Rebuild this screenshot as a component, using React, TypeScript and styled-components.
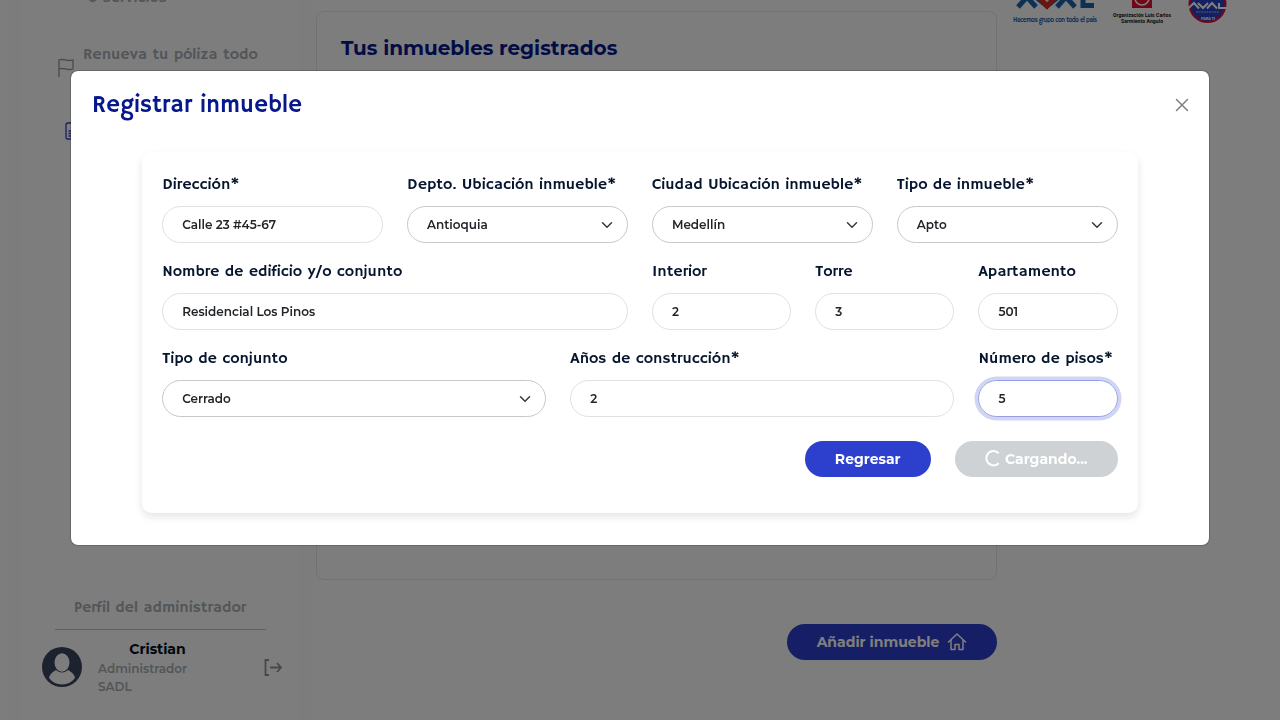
import React from "react";
import styled, { createGlobalStyle } from "styled-components";

const Global = createGlobalStyle`
  *{box-sizing:border-box}
  html,body{margin:0;height:720px;overflow:hidden}
  body{font-family:Montserrat,Inter,"Liberation Sans",sans-serif;background:#fafafa;color:#212529}
  button,input,select{font:inherit}
  svg{display:block;flex:none}
`;

const HEAD = `"Hammersmith One","Noto Sans","Liberation Sans",sans-serif`;

const Page = styled.div`height:720px;display:flex;overflow:hidden;padding-left:20px;background:#fafafa;`;
const Sidebar = styled.aside`width:280px;height:720px;display:flex;flex-direction:column;background:#fbfbfb;box-shadow:0 0 20px rgba(0,0,0,.035);`;
const Nav = styled.nav`flex:1;display:flex;flex-direction:column;`;
const NavTail = styled.div`height:28px;margin:-14px 0 0 68px;font:600 16px/24px ${HEAD};color:#a5acb3;`;
const NavItem = styled.div`display:flex;gap:8px;margin:29px 0 0 37px;align-items:flex-start;color:#a5acb3;font:600 16px/24px ${HEAD};`;
const FlagSlot = styled.span`padding-top:15px;`;
const DocSlot = styled.span`margin:43px 0 0 43px;`;
const Profile = styled.section`padding:0 18px 0 22px;height:125px;`;
const ProfileTitle = styled.h3`margin:0 16px 0 13px;height:35px;border-bottom:1px solid #b8bdd4;padding:1px 1px 0 0;text-align:center;font:600 16px/24px ${HEAD};color:#a5acb3;`;
const ProfileRow = styled.div`display:flex;align-items:center;margin-top:8px;`;
const ProfileText = styled.div`width:116px;margin-left:16px;font-size:12px;line-height:18px;font-weight:600;color:#a5acb3;`;
const UserName = styled.div`padding-left:3px;white-space:nowrap;text-align:center;font-weight:700;font-size:14px;line-height:22px;color:#000b20;`;
const Exit = styled.span`margin:2px 0 0 46px;`;
const Main = styled.main`width:681px;margin:11px 0 0 16px;display:flex;flex-direction:column;align-items:flex-end;`;
const Panel = styled.section`width:681px;height:569px;border:1px solid #e5e5e5;border-radius:8px;padding:20px 24px;`;
const PanelTitle = styled.h2`margin:0;font-size:20px;line-height:32px;font-weight:700;color:#06188c;`;
const Logos = styled.div`display:flex;align-items:flex-start;margin-left:15px;height:30px;`;

const Pill = styled.button<{ $w: number; $muted?: boolean }>`
  width:${p => p.$w}px;height:36px;border:0;border-radius:18px;padding:0;
  display:flex;align-items:center;justify-content:center;gap:${p => (p.$muted ? 4 : 8)}px;
  background:${p => (p.$muted ? "#ced2d5" : "#2c3fcd")};color:#fff;font-size:14px;font-weight:700;
`;
const AddSlot = styled.div`margin-top:44px;`;

const Backdrop = styled.div`position:fixed;inset:0;background:rgba(0,0,0,.5);display:flex;justify-content:center;align-items:flex-start;padding-top:70px;`;
const Dialog = styled.div`width:1140px;height:476px;background:#fff;background-clip:padding-box;border:1px solid rgba(0,0,0,.175);border-radius:8px;`;
const DialogHead = styled.header`display:flex;justify-content:space-between;align-items:center;height:67px;padding:0 20px 0 21px;`;
const DialogTitle = styled.h1`margin:0;font:400 24px/32px ${HEAD};color:#06188c;`;
const Card = styled.form`width:996px;height:361px;margin:14px auto 0;padding:20px 20.250px 20px 20.150px;border-radius:10px;background:#fff;box-shadow:0 4px 8px rgba(0,0,0,.1);`;
const Grid = styled.div`display:grid;grid-template-columns:repeat(12,minmax(0,1fr));column-gap:24px;row-gap:16px;`;
const Field = styled.label<{ $span: number }>`grid-column:span ${p => p.$span};display:flex;flex-direction:column;gap:9px;`;
const Label = styled.span`height:25px;padding-top:1px;font:600 16px/24px ${HEAD};color:#04152d;white-space:nowrap;`;
const Control = styled.span<{ $select?: boolean; $focus?: boolean }>`
  height:37px;padding:0 12px 0 19px;display:flex;align-items:center;justify-content:space-between;
  border:1px solid ${p => (p.$focus ? "#969fe6" : p.$select ? "#c8c8c8" : "#dee2e6")};border-radius:19px;
  box-shadow:${p => (p.$focus ? "0 0 0 3.500px rgba(44,63,205,.22)" : "none")};
  font-size:12px;font-weight:600;color:#212529;
`;
const Actions = styled.div`display:flex;justify-content:flex-end;gap:24px;margin-top:24px;`;

const Chevron = () => (
  <svg width="16" height="12" viewBox="0 0 16 16"><path d="m2 5 6 6 6-6" fill="none" stroke="#343a40" strokeWidth="2" strokeLinecap="round" strokeLinejoin="round" /></svg>
);

type F = { label: string; value: string; span: number; select?: boolean; focus?: boolean };
const fields: F[] = [
  { label: "Dirección*", value: "Calle 23 #45-67", span: 3 },
  { label: "Depto. Ubicación inmueble*", value: "Antioquia", span: 3, select: true },
  { label: "Ciudad Ubicación inmueble*", value: "Medellín", span: 3, select: true },
  { label: "Tipo de inmueble*", value: "Apto", span: 3, select: true },
  { label: "Nombre de edificio y/o conjunto", value: "Residencial Los Pinos", span: 6 },
  { label: "Interior", value: "2", span: 2 },
  { label: "Torre", value: "3", span: 2 },
  { label: "Apartamento", value: "501", span: 2 },
  { label: "Tipo de conjunto", value: "Cerrado", span: 5, select: true },
  { label: "Años de construcción*", value: "2", span: 5 },
  { label: "Número de pisos*", value: "5", span: 2, focus: true },
];

const BrandLogos = () => (
  <svg width="220" height="26" viewBox="1012 0 220 26">
    <g fontFamily="Roboto,sans-serif" fontWeight="700">
      <g fill="none" strokeWidth="5">
        <path d="M1018 7l9-10 9 10M1057 7l9-10 9 10M1083-3V5.500h11" stroke="#1f61aa" />
        <path d="M1036-3l11 9 11-9" stroke="#1f61aa" />
      </g>
      <path d="M1038-4l9 10 9-10" fill="none" stroke="#d8281e" strokeWidth="5" />
      <text x="1013" y="22" fontSize="6.500" fill="#1f61aa" textLength="84" fontFamily="Hammersmith One,sans-serif" fontWeight="400">Hacemos grupo con todo el país</text>
      <path d="M1132-2h20V8h-20z" fill="#e5102a" />
      <circle cx="1142" cy="-2" r="7" fill="none" stroke="#fff" strokeWidth="1.6" />
      <text x="1113" y="17" fontSize="5" fill="#111" textLength="58">Organización Luis Carlos</text>
      <text x="1121" y="22.500" fontSize="5" fill="#111" textLength="42">Sarmiento Angulo</text>
      <circle cx="1207.500" cy="4" r="18" fill="#2742c4" stroke="#e5102a" strokeWidth="2" />
      <path d="M1188 8.500l6-5.500 5 5.500M1198 3l5 5 5-5M1207 8.500l5-5.500 5 5.500M1219 3v5h8" fill="none" stroke="#fff" strokeWidth="2" />
      <path d="M1196 12h23" stroke="#fff" strokeOpacity=".6" strokeWidth="1" strokeDasharray="2 .6" />
      <text x="1201" y="20" fontSize="4" fill="#fff" textLength="14">PARA TI</text>
    </g>
  </svg>
);

export default function App() {
  return (
    <>
      <Global />
      <Page>
        <Sidebar>
          <Nav>
            <NavTail>o servicios</NavTail>
            <NavItem>
              <FlagSlot><svg width="18" height="20" viewBox="0 0 18 20"><path d="M2 19V2c5-2 8 2 14 0v9c-6 2-9-2-14 0" fill="none" stroke="#8d949c" strokeWidth="1.300" /></svg></FlagSlot>
              <span>Renueva tu póliza todo</span>
            </NavItem>
            <DocSlot><svg width="16" height="20" viewBox="0 0 16 20"><path d="M4 2h8l3 3v13H4q-1 0-1-2V4q0-2 2-2M5.500 10h8M5.500 12.500h8M5.500 15h8" fill="none" stroke="#2c3fcd" strokeWidth="1.300" /></svg></DocSlot>
          </Nav>
          <Profile>
            <ProfileTitle>Perfil del administrador</ProfileTitle>
            <ProfileRow>
              <svg width="40" height="40" viewBox="0 0 40 40"><circle cx="20" cy="20" r="20" fill="#39465c" /><ellipse cx="20" cy="15.500" rx="7.500" ry="9.300" fill="#fbfbfb" /><path d="M7 31q1-5 7-8 6 5 12 0 6 3 7 8-5 6.500-13 6.500T7 31" fill="#fbfbfb" /></svg>
              <ProfileText><UserName>Cristian</UserName>Administrador<br />SADL</ProfileText>
              <Exit><svg width="22" height="18" viewBox="3 0 22 18"><path d="M12 1H8.500v15H12M13 8.500h11m-4-4.500 4 4.500-4 4.500" fill="none" stroke="#8b9199" strokeWidth="1.800" /></svg></Exit>
            </ProfileRow>
          </Profile>
        </Sidebar>
        <Main>
          <Panel><PanelTitle>Tus inmuebles registrados</PanelTitle></Panel>
          <AddSlot>
            <Pill $w={210}>Añadir inmueble
              <svg width="20" height="18" viewBox="0 0 20 18"><path d="M1.500 9 10 1l8.500 8M4 7v9.500h4v-5h4v5h4V7" fill="none" stroke="#fff" strokeWidth="1.500" strokeLinecap="round" strokeLinejoin="round" /></svg>
            </Pill>
          </AddSlot>
        </Main>
        <Logos><BrandLogos /></Logos>
      </Page>
      <Backdrop>
        <Dialog role="dialog">
          <DialogHead>
            <DialogTitle>Registrar inmueble</DialogTitle>
            <svg width="14" height="14" viewBox="0 0 14 14"><path d="m1.500 1.500 11 11m0-11-11 11" stroke="#7f7f7f" strokeWidth="1.500" strokeLinecap="round" /></svg>
          </DialogHead>
          <Card>
            <Grid>
              {fields.map(f => (
                <Field key={f.label} $span={f.span}>
                  <Label>{f.label}</Label>
                  <Control $select={f.select} $focus={f.focus}>{f.value}{f.select && <Chevron />}</Control>
                </Field>
              ))}
            </Grid>
            <Actions>
              <Pill type="button" $w={126}>Regresar</Pill>
              <Pill type="button" $w={163} $muted>
                <svg width="16" height="18" viewBox="0 0 16 18"><path d="M13.700 3.200A7.200 7.200 0 1 0 13.700 13.200" fill="none" stroke="#fff" strokeWidth="2" /></svg>
                Cargando...
              </Pill>
            </Actions>
          </Card>
        </Dialog>
      </Backdrop>
    </>
  );
}
